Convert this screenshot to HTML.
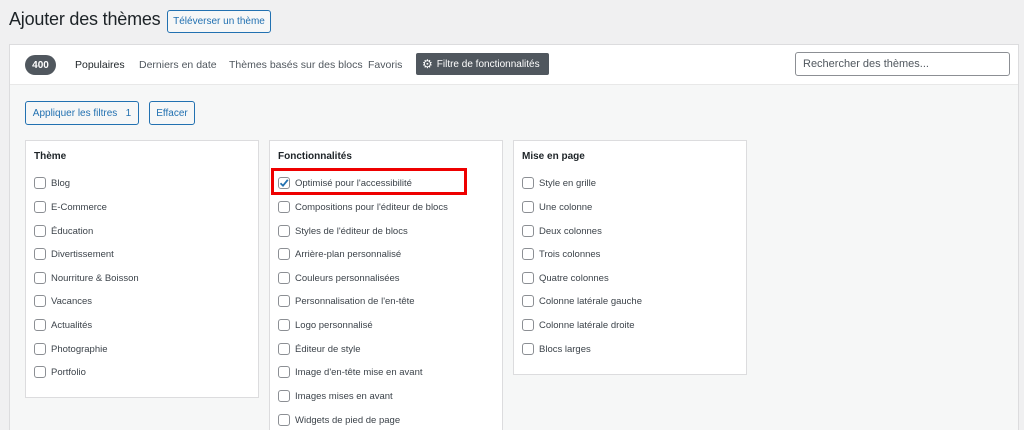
<!DOCTYPE html>
<html style="overflow:hidden;height:430px"><head><meta charset="utf-8"><style>
*{box-sizing:border-box;margin:0;padding:0}
body{width:1024px;height:430px;overflow:hidden;background:#f0f0f1;font-family:"Liberation Sans",sans-serif;color:#3c434a;position:relative}
.abs{position:absolute}
h1{position:absolute;left:9px;top:9px;font-size:18px;letter-spacing:-0.2px;font-weight:400;color:#1d2327}
.btn{position:absolute;border:1px solid #2271b1;color:#2271b1;border-radius:3px;background:#f6f7f7;font-size:10px;display:flex;align-items:center;justify-content:center}
.panel{position:absolute;left:9px;top:44px;width:1010px;height:420px;border:1px solid #dcdcde;background:#f6f7f7}
.hdr{position:absolute;left:0;top:0;width:100%;height:40px;background:#fff;border-bottom:1px solid #e8e8e8}
.nav{position:absolute;top:14px;font-size:10.5px;color:#50575e}
.col{position:absolute;top:140px;width:234px;background:#fff;border:1px solid #dcdcde}
.col h4{position:absolute;left:8px;top:10px;font-size:10px;font-weight:700;color:#1d2327}
.it{position:absolute;left:8px;font-size:9.5px;color:#3c434a;display:flex;align-items:center}
.cb{width:12px;height:12px;border:1px solid #8c8f94;border-radius:3px;background:#fff;margin-right:5px;position:relative}
</style></head><body>
<h1>Ajouter des thèmes</h1>
<div class="btn" style="left:167px;top:10px;width:104px;height:23px;">Téléverser un thème</div>
<div class="panel">
 <div class="hdr">
  <div class="abs" style="left:15px;top:10px;width:31px;height:20px;border-radius:10px;background:#50575e;color:#fff;font-size:10px;font-weight:700;display:flex;align-items:center;justify-content:center">400</div>
  <div class="nav" style="left:65px;color:#1d2327">Populaires</div>
  <div class="nav" style="left:129px">Derniers en date</div>
  <div class="nav" style="left:219px">Thèmes basés sur des blocs</div>
  <div class="nav" style="left:358px">Favoris</div>
  <div class="abs" style="left:406px;top:8px;width:133px;height:22px;background:#50575e;border-radius:2px;color:#fff;font-size:10px;display:flex;align-items:center;padding-left:6px"><span style="font-size:12px;margin-right:4px">⚙</span>Filtre de fonctionnalités</div>
  <div class="abs" style="left:785px;top:7px;width:215px;height:24px;border:1px solid #8c8f94;border-radius:3px;background:#fff;font-size:11px;color:#50575e;padding:5px 7px">Rechercher des thèmes...</div>
 </div>
</div>
<div class="btn" style="left:25px;top:101px;width:114px;height:24px;">Appliquer les filtres&nbsp;&nbsp;&nbsp;1</div>
<div class="btn" style="left:149px;top:101px;width:46px;height:24px;">Effacer</div>

<div class="col" style="left:25px;height:258px"><h4>Thème</h4>
<div class="it" style="top:36px"><div class="cb"></div>Blog</div>
<div class="it" style="top:60px"><div class="cb"></div>E-Commerce</div>
<div class="it" style="top:84px"><div class="cb"></div>Éducation</div>
<div class="it" style="top:107px"><div class="cb"></div>Divertissement</div>
<div class="it" style="top:131px"><div class="cb"></div>Nourriture &amp; Boisson</div>
<div class="it" style="top:154px"><div class="cb"></div>Vacances</div>
<div class="it" style="top:178px"><div class="cb"></div>Actualités</div>
<div class="it" style="top:202px"><div class="cb"></div>Photographie</div>
<div class="it" style="top:225px"><div class="cb"></div>Portfolio</div>
</div>

<div class="col" style="left:269px;height:310px"><h4>Fonctionnalités</h4>
<div class="it" style="top:36px"><div class="cb"><svg width="12" height="12" style="position:absolute;left:-1px;top:-1px" viewBox="0 0 12 12"><path d="M2.5 6.2 L5 8.7 L9.8 2.8" stroke="#2271b1" stroke-width="1.8" fill="none"/></svg></div>Optimisé pour l'accessibilité</div>
<div class="it" style="top:60px"><div class="cb"></div>Compositions pour l'éditeur de blocs</div>
<div class="it" style="top:84px"><div class="cb"></div>Styles de l'éditeur de blocs</div>
<div class="it" style="top:107px"><div class="cb"></div>Arrière-plan personnalisé</div>
<div class="it" style="top:131px"><div class="cb"></div>Couleurs personnalisées</div>
<div class="it" style="top:154px"><div class="cb"></div>Personnalisation de l'en-tête</div>
<div class="it" style="top:178px"><div class="cb"></div>Logo personnalisé</div>
<div class="it" style="top:202px"><div class="cb"></div>Éditeur de style</div>
<div class="it" style="top:225px"><div class="cb"></div>Image d'en-tête mise en avant</div>
<div class="it" style="top:249px"><div class="cb"></div>Images mises en avant</div>
<div class="it" style="top:273px"><div class="cb"></div>Widgets de pied de page</div>
</div>
<div class="abs" style="left:271px;top:168px;width:196px;height:27px;border:3px solid #e00;"></div>

<div class="col" style="left:513px;height:235px"><h4>Mise en page</h4>
<div class="it" style="top:36px"><div class="cb"></div>Style en grille</div>
<div class="it" style="top:60px"><div class="cb"></div>Une colonne</div>
<div class="it" style="top:84px"><div class="cb"></div>Deux colonnes</div>
<div class="it" style="top:107px"><div class="cb"></div>Trois colonnes</div>
<div class="it" style="top:131px"><div class="cb"></div>Quatre colonnes</div>
<div class="it" style="top:154px"><div class="cb"></div>Colonne latérale gauche</div>
<div class="it" style="top:178px"><div class="cb"></div>Colonne latérale droite</div>
<div class="it" style="top:202px"><div class="cb"></div>Blocs larges</div>
</div>
</body></html>
